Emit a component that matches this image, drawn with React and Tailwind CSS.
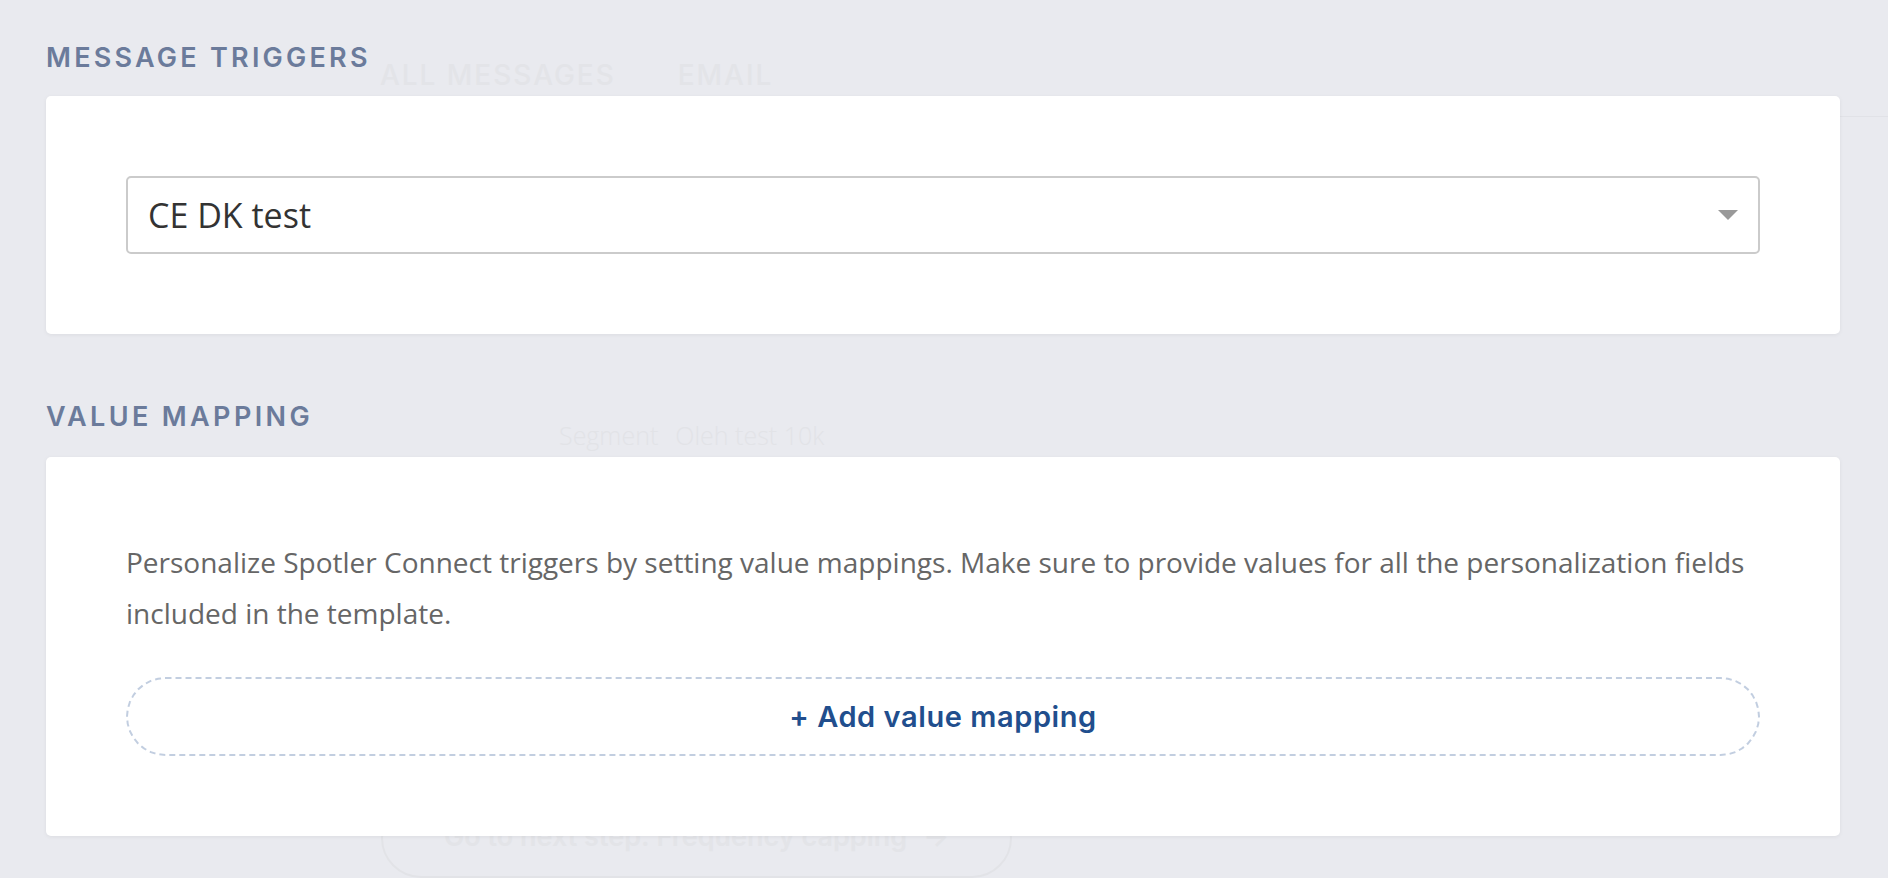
export default function App() {
  return (
    <div className="relative w-full h-[878px] overflow-hidden bg-[#e9eaef]">
      {/* page underneath the overlay */}
      <div className="pt-[54px] select-none">
        <div className="flex gap-[62px] ml-[370px] pl-[10px] pb-[20px] border-b border-[#e1e2e7] text-[28px] font-medium tracking-[0.07em] text-[#e3e4e8] font-['Inter',sans-serif]">
          <span>ALL MESSAGES</span>
          <span>EMAIL</span>
        </div>
        <div className="pl-[559px] mt-[300px] text-[25px] font-light text-[#e2e3e7] flex gap-[17px] font-['Open_Sans',sans-serif]">
          <span>Segment</span>
          <span>Oleh test 10k</span>
        </div>
        <div className="ml-[381px] mt-[343px] w-[631px] h-[80px] rounded-full border-2 border-[#e2e3e7] flex items-center justify-center gap-4 text-[27px] font-semibold text-[#e3e4e8] font-['Inter',sans-serif]">
          <span>Go to next step: Frequency capping</span>
          <span>→</span>
        </div>
      </div>

      {/* overlay */}
      <div className="absolute inset-0 px-[46px] pt-[41px] font-['Open_Sans',sans-serif]">
        <h2 className="text-[27px] font-semibold tracking-[0.12em] text-[#6b7b9b] leading-[34px] font-['Inter',sans-serif]">
          MESSAGE TRIGGERS
        </h2>
        <div className="mt-[21px] bg-white rounded-[5px] shadow-[0_1px_4px_rgba(0,0,0,0.06)] p-[80px] w-[1794px]">
          <div className="h-[78px] rounded-[5px] border-2 border-[#cbcbcb] flex items-center justify-between pl-[20px] pr-[20px]">
            <span className="text-[34px] text-[#333333]">CE DK test</span>
            <svg width="20" height="10" viewBox="0 0 20 10">
              <path d="M0 0 L20 0 L10 10 Z" fill="#999999" />
            </svg>
          </div>
        </div>

        <h2 className="mt-[66px] text-[27px] font-semibold tracking-[0.125em] text-[#6b7b9b] leading-[34px] font-['Inter',sans-serif]">
          VALUE MAPPING
        </h2>
        <div className="mt-[23px] bg-white rounded-[5px] shadow-[0_1px_4px_rgba(0,0,0,0.06)] px-[80px] pt-[80px] pb-[80px] w-[1794px]">
          <p className="text-[28px] leading-[51px] text-[#666666]">
            Personalize Spotler Connect triggers by setting value mappings. Make sure to provide values for all the personalization fields included in the template.
          </p>
          <button className="mt-[38px] w-full h-[79px] rounded-full border-2 border-dashed border-[#c2cee0] flex items-center justify-center text-[29px] font-semibold tracking-[0.02em] text-[#214e8d] font-['Inter',sans-serif]">
            + Add value mapping
          </button>
        </div>
      </div>
    </div>
  );
}
